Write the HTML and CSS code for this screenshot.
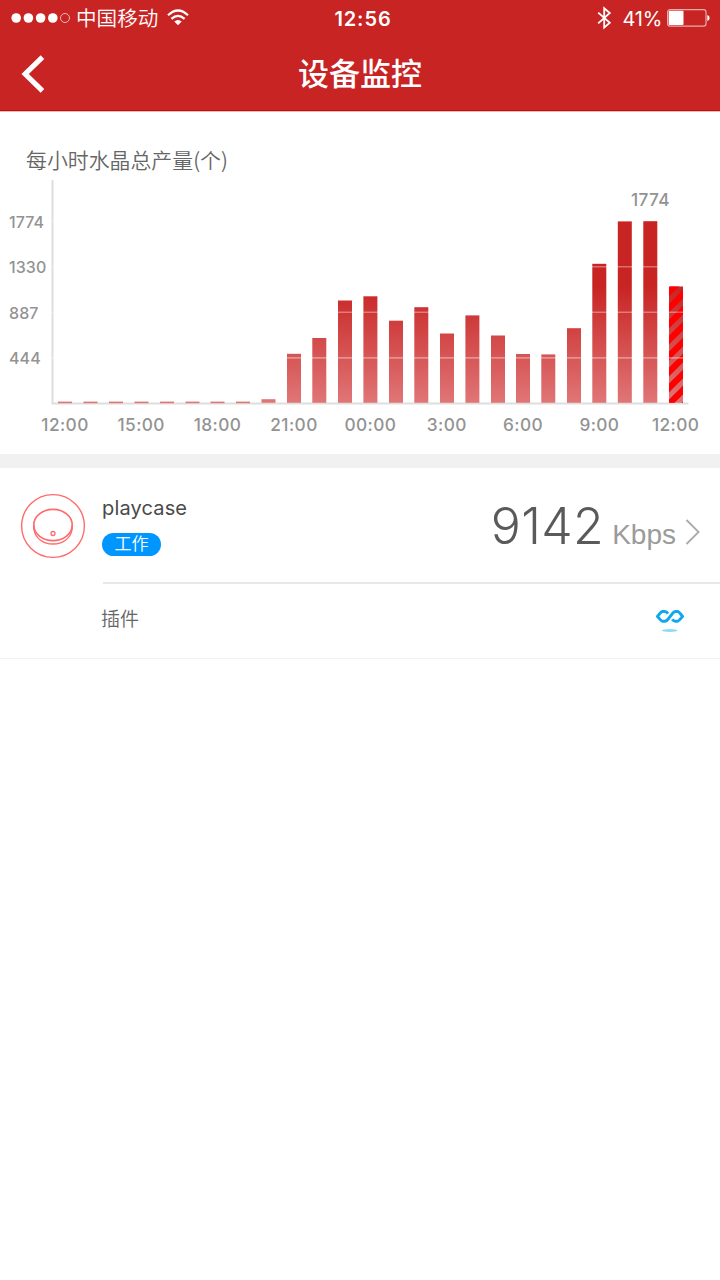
FILE: index.html
```html
<!DOCTYPE html>
<html lang="zh-CN">
<head>
  <meta charset="UTF-8">
  <meta name="viewport" content="width=device-width, initial-scale=1.0">
  <title>设备监控</title>
  <link rel="stylesheet" href="styles.css">
</head>
<body>

  <!-- Header -->
  <header class="header">
    <div class="status-bar">
      <div class="status-left">
        <svg class="signal" width="60" height="12" viewBox="0 0 60 12">
          <g fill="#fff">
            <circle cx="5.2" cy="6" r="4.8"/>
            <circle cx="17.4" cy="6" r="4.8"/>
            <circle cx="29.6" cy="6" r="4.8"/>
            <circle cx="41.8" cy="6" r="4.8"/>
          </g>
          <circle cx="54" cy="6" r="4.5" fill="none" stroke="#f3c4c4" stroke-width="0.9"/>
        </svg>
        <span class="carrier">中国移动</span>
        <svg class="wifi" width="22" height="17" viewBox="0 0 22 17">
          <g fill="none" stroke="#fff" stroke-width="2.2">
            <path d="M1 6.3 Q11 -3.3 21 6.3"/>
            <path d="M4.4 9.9 Q11 3.7 17.6 9.9"/>
          </g>
          <path d="M7.3 12.6 Q11 9.2 14.7 12.6 L11 16.3 Z" fill="#fff"/>
        </svg>
      </div>
      <span class="clock">12:56</span>
      <div class="status-right">
        <svg class="bluetooth" width="15" height="24" viewBox="0 0 15 24">
          <path d="M1.2 6.6 L12.8 16.8 L7.2 21.6 V2.2 L12.8 7 L1.2 17.4" fill="none" stroke="#fff" stroke-width="1.8"/>
        </svg>
        <span class="percent">41%</span>
        <svg class="battery" width="43" height="18" viewBox="0 0 43 18">
          <rect x="0.6" y="0.7" width="38.4" height="16.4" rx="2.4" fill="none" stroke="#eba9a9" stroke-width="1.2"/>
          <rect x="1.7" y="1.8" width="14.8" height="14.2" rx="1" fill="#fff"/>
          <path d="M40.3 6 Q42.6 6.6 42.6 9 Q42.6 11.4 40.3 12 Z" fill="#fff"/>
        </svg>
      </div>
    </div>
    <div class="nav-bar">
      <svg class="back" width="24" height="38" viewBox="0 0 24 38">
        <path d="M22.5 2.2 L5.2 19 L22.5 35.8" fill="none" stroke="#fff" stroke-width="5.2"/>
      </svg>
      <h1 class="title">设备监控</h1>
    </div>
  </header>

  <!-- Hourly output chart -->
  <section class="chart-panel">
    <h2 class="chart-title">每小时水晶总产量(个)</h2>
    <svg class="chart" width="720" height="270" viewBox="0 176 720 270">
      <defs>
        <linearGradient id="bar" gradientUnits="userSpaceOnUse" x1="0" y1="286" x2="0" y2="403">
          <stop offset="0" stop-color="#c82423"/>
          <stop offset="1" stop-color="#e07677"/>
        </linearGradient>
        <pattern id="stripes" patternUnits="userSpaceOnUse" width="16" height="16" x="669" y="276">
          <path d="M-4 4 L4 -4 M-4 20 L20 -4 M12 20 L20 12" stroke="#f00" stroke-width="6.2"/>
        </pattern>
      </defs>

      <path class="axis" d="M52.5 180 V403.6 H688.5"/>

      <g fill="url(#bar)">
        <rect x="58" y="401.6" width="14" height="1.6"/>
        <rect x="83.5" y="401.6" width="14" height="1.6"/>
        <rect x="109" y="401.6" width="14" height="1.6"/>
        <rect x="134.5" y="401.6" width="14" height="1.6"/>
        <rect x="160" y="401.6" width="14" height="1.6"/>
        <rect x="185.5" y="401.6" width="14" height="1.6"/>
        <rect x="210.5" y="401.6" width="14" height="1.6"/>
        <rect x="236" y="401.6" width="14" height="1.6"/>
        <rect x="261.5" y="399.2" width="14" height="3.6"/>
        <rect x="287" y="353.8" width="14" height="49"/>
        <rect x="312.3" y="338" width="14" height="64.8"/>
        <rect x="338" y="300.5" width="14" height="102.3"/>
        <rect x="363.4" y="296.3" width="14" height="106.5"/>
        <rect x="389" y="320.7" width="14" height="82.1"/>
        <rect x="414.3" y="307.2" width="14" height="95.6"/>
        <rect x="440" y="333.5" width="14" height="69.3"/>
        <rect x="465.4" y="315.4" width="14" height="87.4"/>
        <rect x="491" y="335.5" width="14" height="67.3"/>
        <rect x="516" y="354" width="14" height="48.8"/>
        <rect x="541.3" y="354.4" width="14" height="48.4"/>
        <rect x="567" y="328.2" width="14" height="74.6"/>
        <rect x="592.3" y="263.8" width="14" height="139"/>
        <rect x="617.8" y="221.4" width="14" height="181.4"/>
        <rect x="643.3" y="221.2" width="14" height="181.6"/>
        <rect x="669" y="286.5" width="14" height="116.3"/>
      </g>
      <rect x="669" y="286.5" width="14" height="116.3" fill="url(#stripes)"/>

      <path class="grid" d="M52 221.3 H56 M52 266.8 H688 M52 312.3 H688 M52 357.9 H688"/>

      <g class="y-labels">
        <text x="9" y="227.5">1774</text>
        <text x="9" y="273">1330</text>
        <text x="9" y="318.5">887</text>
        <text x="9" y="364">444</text>
      </g>
      <g class="x-labels">
        <text x="65" y="431">12:00</text>
        <text x="141.2" y="431">15:00</text>
        <text x="217.5" y="431">18:00</text>
        <text x="294" y="431">21:00</text>
        <text x="370.4" y="431">00:00</text>
        <text x="446.8" y="431">3:00</text>
        <text x="523" y="431">6:00</text>
        <text x="599.4" y="431">9:00</text>
        <text x="675.7" y="431">12:00</text>
        <text x="650.5" y="205.5">1774</text>
      </g>
    </svg>
  </section>

  <!-- Device -->
  <section class="device">
    <div class="device-row">
      <svg class="device-icon" width="66" height="66" viewBox="0 0 66 66">
        <g fill="none" stroke="#ff6b6b">
          <circle cx="33" cy="33" r="31.4" stroke-width="1.4"/>
          <ellipse cx="33" cy="32" rx="19.2" ry="15.6" stroke-width="1.6"/>
          <path d="M13.8 32 V36 C15.5 46 23.5 51 33 51 C42.5 51 50.5 46 52.2 36 V32" stroke-width="1.4"/>
          <circle cx="33" cy="40.5" r="2" stroke-width="1.3"/>
        </g>
      </svg>
      <div class="device-info">
        <span class="device-name">playcase</span>
        <span class="badge">工作</span>
      </div>
      <div class="speed">
        <span class="speed-value">9142</span>
        <span class="speed-unit">Kbps</span>
      </div>
      <svg class="arrow" width="16" height="26" viewBox="0 0 16 26">
        <path d="M1.5 1 L13.6 13 L1.5 25" fill="none" stroke="#aaa" stroke-width="1.8"/>
      </svg>
    </div>
    <div class="plugin-row">
      <span class="plugin-label">插件</span>
      <svg class="plugin-icon" width="30" height="24" viewBox="0 0 30 24">
        <path d="M12.9 4.6 Q11.6 2.6 9.8 2.6 H7.4 Q6.4 2.6 2.4 7.4 Q6.4 12.2 7.4 12.2 H9.8 Q11.4 12.2 13 10.2 L17.2 4.8 Q18.8 2.6 20.4 2.6 H22.6 Q23.6 2.6 27.6 7.4 Q23.6 12.2 22.6 12.2 H20.4 Q18.6 12.2 17.3 10.2" fill="none" stroke="#0fa8ee" stroke-width="3" stroke-linejoin="round"/>
        <ellipse cx="14.7" cy="21.5" rx="7.8" ry="1.4" fill="#91d8f8"/>
      </svg>
    </div>
  </section>

</body>
</html>
```
FILE: styles.css
```css
body {
  margin: 0;
  background-color: #fff;
  font-family: Inter, "Noto Sans CJK SC", sans-serif;
  color: #4a4a4a;
}

svg {
  display: block;
  flex-shrink: 0;
}

/* Header */
.header {
  height: 111px;
  background-color: #c82424;
  color: #fff;
  box-shadow: inset 0 -1px #c40d10, 0 1px #e9bcbc;
}

.status-bar {
  display: grid;
  grid-template-columns: 1fr auto 1fr;
  align-items: center;
  height: 36px;
  padding: 0 10px 0 11px;
}

.status-left,
.status-right {
  display: flex;
  align-items: center;
}

.status-left {
  height: 36px;
}

.status-right {
  justify-content: flex-end;
}

.carrier {
  margin-left: 5px;
  padding-top: 2px;
  font-size: 20.6px;
  font-weight: 350;
  line-height: 36px;
}

.wifi {
  margin: 0 0 1px 9px;
}

.clock {
  padding: 1px 0 0 5px;
  font-size: 20px;
  font-weight: 600;
  letter-spacing: 0.9px;
}

.percent {
  margin: 1px 5px 0 11px;
  font-size: 20px;
  letter-spacing: -0.3px;
}

.nav-bar {
  display: grid;
  grid-template-columns: 60px 1fr 60px;
  align-items: center;
  height: 75px;
}

.back {
  margin-left: 20px;
}

.title {
  margin: 0;
  font-size: 31px;
  font-weight: 500;
  line-height: 73px;
  text-align: center;
}

/* Chart */
.chart-panel {
  height: 310px;
  padding-top: 33px;
  border-bottom: 14px solid #f1f1f1;
}

.chart-title {
  height: 32px;
  margin: 0 0 0 26px;
  font-family: "Noto Sans CJK SC", sans-serif;
  font-size: 20.9px;
  font-weight: 350;
  line-height: 30px;
  color: #666;
}

.axis {
  fill: none;
  stroke: #dedede;
  stroke-width: 2;
}

.grid {
  stroke: #fff;
  stroke-opacity: 0.35;
  stroke-width: 1.6;
}

.y-labels,
.x-labels {
  fill: #939393;
  font-size: 16px;
  font-weight: 450;
  letter-spacing: 0.1px;
}

.x-labels {
  font-size: 17.3px;
  letter-spacing: 0.4px;
  text-anchor: middle;
}

/* Device */
.device-row {
  display: flex;
  align-items: center;
  height: 114px;
  padding-left: 20px;
  padding-right: 19px;
}

.device-icon {
  margin-top: 1px;
}

.device-info {
  display: flex;
  flex-direction: column;
  align-items: flex-start;
  margin: 1px 0 0 16px;
}

.device-name {
  font-size: 20px;
  line-height: 26px;
  letter-spacing: 0.15px;
}

.badge {
  width: 59px;
  height: 23px;
  margin-top: 12px;
  border-radius: 12px;
  background-color: #0096ff;
  color: #fff;
  font-size: 17px;
  font-weight: 350;
  line-height: 23px;
  text-align: center;
}

.speed {
  display: flex;
  align-items: baseline;
  margin-left: auto;
  padding-top: 2px;
  white-space: nowrap;
}

.speed-value {
  font-size: 50px;
  font-weight: 300;
  line-height: 60px;
  letter-spacing: 0.4px;
  color: #5a5a5a;
}

.speed-unit {
  margin-left: 8px;
  font-family: "Liberation Sans", sans-serif;
  font-size: 28px;
  color: #9b9b9b;
}

.arrow {
  margin: 13px 0 0 9px;
}

.plugin-row {
  display: flex;
  align-items: center;
  justify-content: space-between;
  height: 76px;
  padding: 0 35px 0 101px;
  border-bottom: 1px solid #f2f2f2;
  background: linear-gradient(#e8e8e8, #e8e8e8) 103px 0 / 617px 2px no-repeat;
}

.plugin-label {
  font-size: 19px;
  font-weight: 350;
  line-height: 28px;
  color: #666;
}

.plugin-icon {
  margin-top: 1px;
}
```
